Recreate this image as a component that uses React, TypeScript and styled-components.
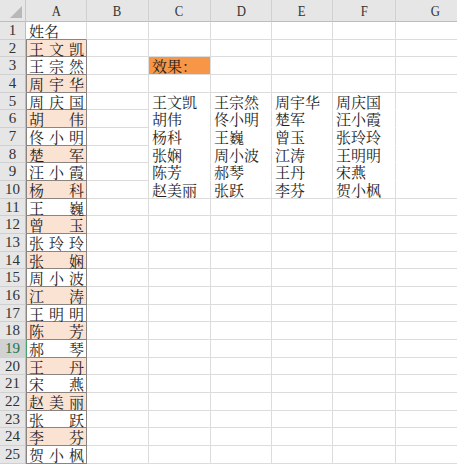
import React from "react";
import styled, { createGlobalStyle, css } from "styled-components";

const Global = createGlobalStyle`
  html, body { margin: 0; padding: 0; background: #fff; overflow: hidden; }
  #root { width: 457px; height: 467px; overflow: hidden; }
`;

const COLS = ["A", "B", "C", "D", "E", "F", "G"];
const NAMES = [
  "王文凯", "王宗然", "周宇华", "周庆国",
  "胡伟", "佟小明", "楚军", "汪小霞",
  "杨科", "王巍", "曾玉", "张玲玲",
  "张娴", "周小波", "江涛", "王明明",
  "陈芳", "郝琴", "王丹", "宋燕",
  "赵美丽", "张跃", "李芬", "贺小枫",
];

const CJK = `"Noto Serif CJK SC", "Noto Sans CJK SC", serif`;
const GRID = "#dcdcdc";
const BOX = "#8a8580";

const Sheet = styled.div`
  display: grid;
  grid-template-columns: 26px 61px 62px 62px 61px 61px 63px 80px;
  grid-template-rows: 22px repeat(25, 17.68px);
  width: 457px;
  overflow: hidden;
`;

const Corner = styled.div`
  background: #e6e6e6;
  border-right: 1px solid #c8c8c8;
  border-bottom: 1px solid #bdbdbd;
  box-sizing: border-box;
  position: relative;
  &::after {
    content: "";
    position: absolute;
    right: 3px;
    bottom: 3px;
    width: 0;
    height: 0;
    border-left: 12px solid transparent;
    border-bottom: 12px solid #b8b8b8;
  }
`;

const ColHead = styled.div`
  background: #e6e6e6;
  border-right: 1px solid #d0d0d0;
  border-bottom: 1px solid #bdbdbd;
  box-sizing: border-box;
  display: flex;
  align-items: center;
  justify-content: center;
`;

const ColLabel = styled.span`
  font-family: "Liberation Serif", serif;
  font-size: 15px;
  line-height: 1;
  color: #333;
  display: inline-block;
  transform: scaleX(0.85);
  padding-top: 1px;
`;

const RowHead = styled.div<{ $active?: boolean }>`
  background: ${(p) => (p.$active ? "#d2d2d2" : "#e6e6e6")};
  border-right: 1px solid #bdbdbd;
  border-bottom: 1px solid #d0d0d0;
  box-sizing: border-box;
  display: flex;
  align-items: center;
  justify-content: center;
  font-family: "Liberation Serif", serif;
  font-size: 15px;
  line-height: 1;
  color: ${(p) => (p.$active ? "#217346" : "#333")};
`;

const Cell = styled.div<{
  $fill?: string;
  $boxed?: boolean;
  $boxTop?: boolean;
  $noH?: boolean;
  $spread?: boolean;
  $active?: boolean;
}>`
  box-sizing: border-box;
  background: ${(p) => p.$fill || "#fff"};
  border-right: 1px solid ${GRID};
  border-bottom: 1px solid ${(p) => (p.$noH ? "transparent" : GRID)};
  display: flex;
  align-items: center;
  padding: 0 2px 0 3px;
  font-family: ${CJK};
  font-size: 15px;
  line-height: 1;
  color: #1e1e1e;
  white-space: nowrap;
  overflow: visible;
  ${(p) =>
    p.$boxed &&
    css`
      border-left: 1px solid ${p.$active ? "#4aa36b" : BOX};
      border-right: 1px solid ${BOX};
      border-bottom: 1px solid ${BOX};
      padding: 0 2px 0 2px;
    `}
  ${(p) =>
    p.$boxTop &&
    css`
      border-bottom: 1px solid ${BOX};
    `}
  ${(p) =>
    p.$spread &&
    css`
      justify-content: space-between;
    `}
`;

const Ch = styled.span`
  display: inline-block;
  line-height: 1;
`;

const Spread: React.FC<{ text: string }> = ({ text }) => (
  <>
    {Array.from(text).map((c, i) => (
      <Ch key={i}>{c}</Ch>
    ))}
  </>
);

export default function App() {
  const cells: React.ReactNode[] = [];
  cells.push(<Corner key="corner" />);
  COLS.forEach((c) =>
    cells.push(
      <ColHead key={`h${c}`}>
        <ColLabel>{c}</ColLabel>
      </ColHead>
    )
  );

  for (let r = 1; r <= 25; r++) {
    cells.push(
      <RowHead key={`r${r}`} $active={r === 19}>
        {r}
      </RowHead>
    );
    if (r === 1) {
      cells.push(
        <Cell key={`a${r}`} $boxTop>
          姓名
        </Cell>
      );
    } else {
      const name = NAMES[r - 2];
      cells.push(
        <Cell
          key={`a${r}`}
          $boxed
          $spread
          $active={r === 19}
          $fill={r % 2 === 0 ? "#fbe3d4" : "#fff"}
        >
          <Spread text={name} />
        </Cell>
      );
    }
    cells.push(<Cell key={`b${r}`} />);
    const inBlock = r >= 5 && r <= 10;
    const noH = r >= 5 && r <= 9;
    for (let ci = 0; ci < 5; ci++) {
      let content: React.ReactNode = null;
      let fill: string | undefined;
      if (r === 3 && ci === 0) {
        content = "效果：";
        fill = "#f79646";
      }
      if (inBlock && ci < 4) {
        content = NAMES[(r - 5) * 4 + ci];
      }
      cells.push(
        <Cell key={`c${r}-${ci}`} $fill={fill} $noH={noH}>
          {content}
        </Cell>
      );
    }
  }

  return (
    <>
      <Global />
      <Sheet>{cells}</Sheet>
    </>
  );
}
